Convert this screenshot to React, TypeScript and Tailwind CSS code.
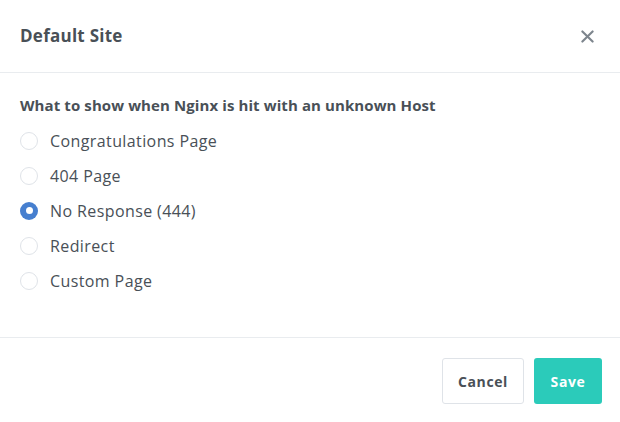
import React from "react";

const options = [
  { label: "Congratulations Page", checked: false },
  { label: "404 Page", checked: false },
  { label: "No Response (444)", checked: true },
  { label: "Redirect", checked: false },
  { label: "Custom Page", checked: false },
];

export default function App() {
  return (
    <div
      className="w-[620px] h-[422px] bg-white flex flex-col text-[#495057]"
      style={{ fontFamily: "'Open Sans', Lato, sans-serif" }}
    >
      <div className="h-[73px] border-b border-[#e9ecef] flex items-center justify-between pl-5 pr-[26px] shrink-0">
        <div className="text-[17px] font-bold text-[#495057] tracking-[0.25px]">Default Site</div>
        <svg width="13" height="13" viewBox="0 0 14 14" className="text-[#7d858d]">
          <path d="M1.5 1.5 L12.5 12.5 M12.5 1.5 L1.5 12.5" stroke="currentColor" strokeWidth="2.3" strokeLinecap="round" />
        </svg>
      </div>
      <div className="h-[264px] pl-5 pt-[22px] shrink-0">
        <div className="text-[15px] font-bold leading-[20px] mb-[8px] tracking-[0.1px]">
          What to show when Nginx is hit with an unknown Host
        </div>
        <div className="flex flex-col">
          {options.map((o) => (
            <div key={o.label} className="h-[35px] flex items-center gap-3">
              {o.checked ? (
                <span className="w-[18px] h-[18px] rounded-full bg-[#467fcf] flex items-center justify-center">
                  <span className="w-[7px] h-[7px] rounded-full bg-white" />
                </span>
              ) : (
                <span className="w-[18px] h-[18px] rounded-full border border-[#dfe3e8] bg-white" />
              )}
              <span className="text-[16px] tracking-[0.4px]">{o.label}</span>
            </div>
          ))}
        </div>
      </div>
      <div className="flex-1 border-t border-[#e9ecef] flex items-center justify-end gap-[10px] pr-[18px] pt-[2px]">
        <button className="w-[82px] h-[46px] rounded-[3px] border border-[#dfe3e8] bg-white text-[14px] font-bold text-[#495057] tracking-[0.6px]">
          Cancel
        </button>
        <button className="w-[68px] h-[46px] rounded-[3px] bg-[#2bcbba] text-[14px] font-bold text-white tracking-[0.6px]">
          Save
        </button>
      </div>
    </div>
  );
}
